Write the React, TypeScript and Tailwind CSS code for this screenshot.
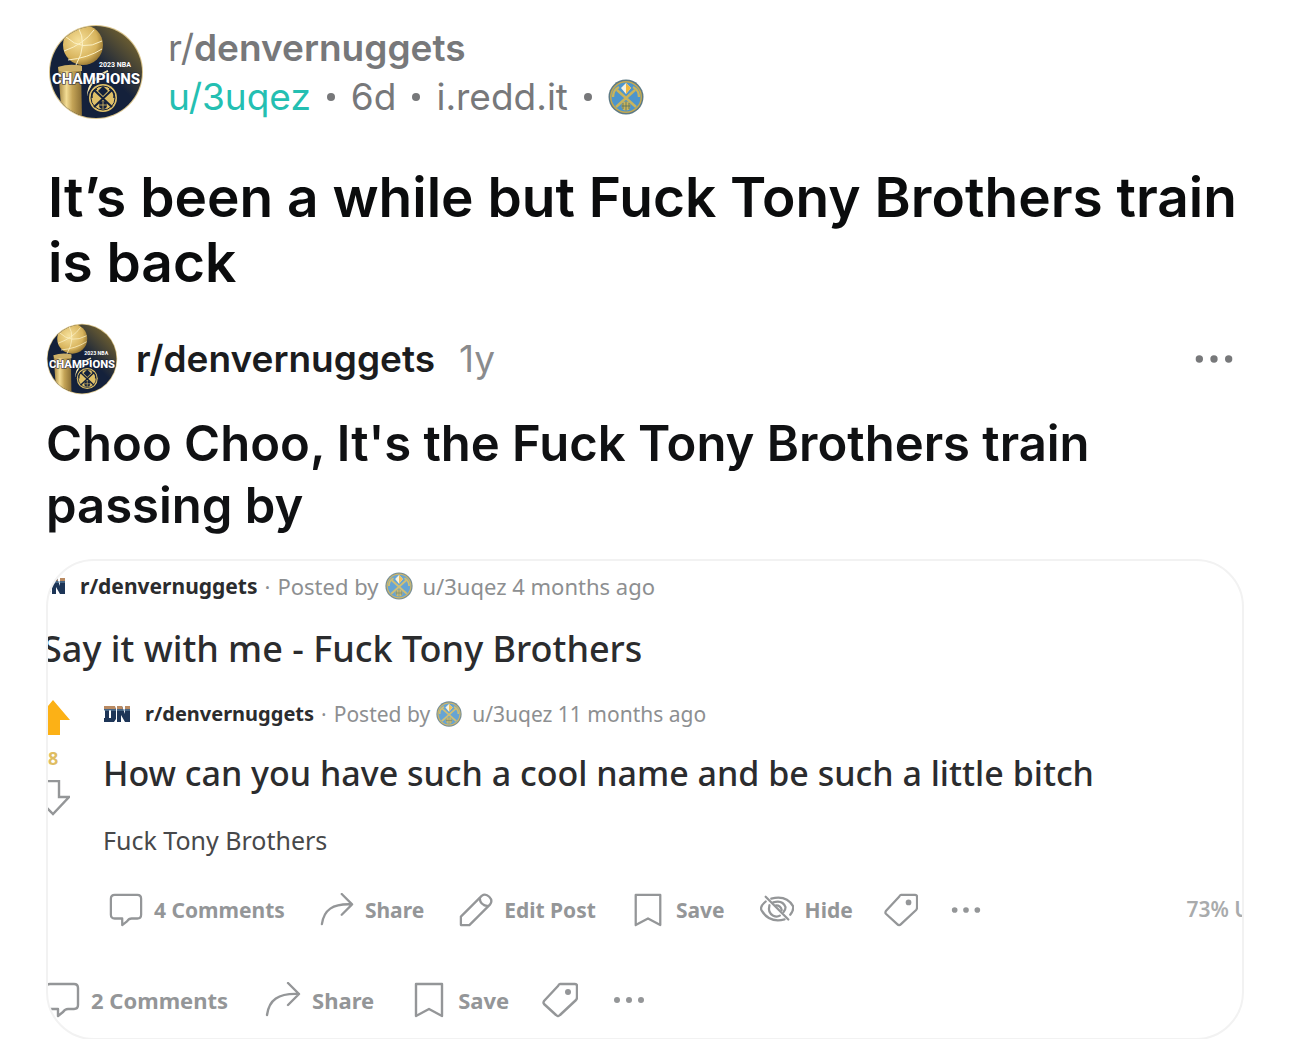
import React from 'react';
import { clsx } from 'clsx';

interface IconProps {
  className?: string;
}

interface Action {
  label: string;
  icon: React.ComponentType<IconProps>;
  iconOnly?: boolean;
}

interface PostMetaProps {
  age: string;
  small?: boolean;
}

function ChampionsLogo({ className }: IconProps) {
  return (
    <svg viewBox="0 0 96 96" className={className} role="img" aria-label="2023 NBA Champions">
      <defs>
        <linearGradient id="navy" x1="0.2" y1="0.8" x2="0.9" y2="0.1">
          <stop offset="0.5" stopColor="#14213b" />
          <stop offset="1" stopColor="#7a672f" />
        </linearGradient>
        <linearGradient id="trophy" x1="0" y1="0" x2="1" y2="0">
          <stop offset="0" stopColor="#9a7c38" />
          <stop offset="0.35" stopColor="#f3dc94" />
          <stop offset="0.6" stopColor="#c4a457" />
          <stop offset="1" stopColor="#8a6e33" />
        </linearGradient>
        <radialGradient id="ball" cx="0.4" cy="0.4" r="0.65">
          <stop offset="0" stopColor="#f6e09a" />
          <stop offset="0.7" stopColor="#d8b45d" />
          <stop offset="1" stopColor="#94742f" />
        </radialGradient>
        <clipPath id="disc">
          <circle cx="48" cy="48" r="46" />
        </clipPath>
      </defs>
      <circle cx="48" cy="48" r="47" fill="#d9c48c" />
      <g clipPath="url(#disc)">
        <rect width="96" height="96" fill="url(#navy)" />
        <path d="M10 43 L33 41 L34 96 L14 96 Z" fill="url(#trophy)" />
        <path d="M10 43 Q22 39 34 42 L34 47 L11 47 Z" fill="#cdb068" />
        <circle cx="35" cy="21" r="20" fill="url(#ball)" />
        <g fill="none" stroke="#fbf0c4" strokeWidth="1">
          <path d="M18 13 Q34 28 54 17" />
          <path d="M16 27 Q36 20 46 6" />
          <path d="M30 3 Q40 20 28 41" />
          <path d="M20 36 Q40 34 54 25" />
        </g>
        <path d="M40 72 Q40 56 60 47" fill="none" stroke="#f7e7ae" strokeWidth="2" />
      </g>
      <text x="51" y="43" fill="#fff" fontSize="7" fontWeight="700" fontFamily="Roboto, sans-serif">
        2023 NBA
      </text>
      <text
        x="48"
        y="60"
        textAnchor="middle"
        fill="#fff"
        stroke="#14213b"
        strokeWidth="1.2"
        paintOrder="stroke"
        fontSize="15"
        fontWeight="800"
        fontFamily="Roboto, sans-serif"
      >
        CHAMPIONS
      </text>
      <circle cx="55" cy="74" r="16" fill="#14213b" />
      <circle cx="55" cy="74" r="14" fill="#dfc068" />
      <circle cx="55" cy="74" r="12" fill="none" stroke="#14213b" strokeWidth="1" />
      <g stroke="#14213b" strokeWidth="2" fill="none">
        <path d="M46 83 L64 66 M64 83 L46 66" />
        <path d="M44 74 Q43 67 49 65 M66 74 Q67 67 61 65" strokeWidth="1.5" />
      </g>
      <path d="M55 62 L60 67 L55 72 L50 67 Z" fill="#14213b" />
      <circle cx="55" cy="81" r="4" fill="#14213b" />
      <path d="M51 81 H59 M55 77 V85" stroke="#dfc068" strokeWidth="0.8" />
    </svg>
  );
}

function NuggetsBadge({ className }: IconProps) {
  return (
    <svg viewBox="0 0 36 36" className={className} role="img" aria-label="Nuggets flair">
      <circle cx="18" cy="18" r="17.5" fill="#5d7a86" />
      <circle cx="18" cy="18" r="16" fill="#c5a94f" />
      <circle cx="18" cy="18" r="14.5" fill="#4d95cc" />
      <path
        d="M8 28 L27 11 M28 28 L9 11 M5 18 Q5 11 11 8 M31 18 Q31 11 25 8"
        fill="none"
        stroke="#c9b45c"
        strokeWidth="2.4"
      />
      <path d="M18 4 L23 9 L18 15 L13 9 Z" fill="#f4f1df" />
      <path d="M18 4 L23 9 L18 15 Z" fill="#efb73c" />
      <circle cx="18" cy="27" r="4.5" fill="#c9b45c" />
      <path d="M13.5 27 H22.5 M18 22.5 V31.5 M15 24 V30 M21 24 V30" stroke="#56705f" strokeWidth="0.8" />
    </svg>
  );
}

function DnLogo({ className }: IconProps) {
  return (
    <svg viewBox="0 0 28 18" className={className} role="img" aria-label="DN">
      <path
        d="M1 1 H11 L13 4 V14 L11 17 H1 V13 H2 V5 H1 Z M6 5 V13 H8 V5 Z M14 1 H19 L22 9 V1 H27 V17 H22 L18 10 V17 H14 Z"
        fill="#1d3557"
        fillRule="evenodd"
      />
      <path d="M1 1 H12 L13 4 H1 Z M14 1 H19 L20 4 H14 Z M22 1 H27 V4 H22 Z" fill="#b98a62" />
      <path d="M1 5 H13 M14 5 H27" stroke="#6f93b0" />
    </svg>
  );
}

function CommentIcon({ className }: IconProps) {
  return (
    <svg viewBox="0 0 36 36" className={className} fill="none" stroke="currentColor" strokeWidth="2.4" strokeLinejoin="round">
      <path d="M6 2 H30 Q34 2 34 6 V23 Q34 27 30 27 H24 Q21 27 19 30 L14 34 V27 H6 Q2 27 2 23 V6 Q2 2 6 2 Z" />
    </svg>
  );
}

function ShareIcon({ className }: IconProps) {
  return (
    <svg viewBox="0 0 36 36" className={className} fill="none" stroke="currentColor" strokeWidth="2.4" strokeLinecap="round" strokeLinejoin="round">
      <path d="M2 33 C4 18 13 11 34 12 M23 1 L34 12 L23 23" />
    </svg>
  );
}

function PencilIcon({ className }: IconProps) {
  return (
    <svg viewBox="0 0 36 36" className={className} fill="none" stroke="currentColor" strokeWidth="2.4" strokeLinejoin="round">
      <path d="M2 34 V25 L24 3 Q28 0 32 4 Q36 8 33 12 L11 34 Z" />
      <path d="M22 5 Q22 13 31 14" />
    </svg>
  );
}

function BookmarkIcon({ className }: IconProps) {
  return (
    <svg viewBox="0 0 36 36" className={className} fill="none" stroke="currentColor" strokeWidth="2.4" strokeLinejoin="round">
      <path d="M5 2 H31 V34 L18 27 L5 34 Z" />
    </svg>
  );
}

function HideIcon({ className }: IconProps) {
  return (
    <svg viewBox="0 0 36 36" className={className} fill="none" stroke="currentColor" strokeWidth="2.4" strokeLinecap="round">
      <path d="M12 6 Q28 2 35 14 Q36 18 32 23" />
      <path d="M6 9 Q-1 15 2 19 Q10 32 26 28" />
      <path d="M14 10 Q24 7 27 15 Q27 18 25 20" />
      <path d="M10 13 Q8 21 14 24 Q18 26 21 24" />
      <path d="M17 13 Q22 13 23 18" />
      <path d="M6 4 L30 28" />
    </svg>
  );
}

function TagIcon({ className }: IconProps) {
  return (
    <svg viewBox="0 0 36 36" className={className} fill="none" stroke="currentColor" strokeWidth="2.4" strokeLinejoin="round">
      <path d="M18 2 H33 Q35 2 35 4 V15 Q35 17 34 18 L18 33 Q16 35 14 33 L2 22 Q1 21 2 19 L16 4 Q17 2 18 2 Z" />
      <circle cx="26" cy="10" r="3" fill="currentColor" stroke="none" />
    </svg>
  );
}

function DotsIcon({ className }: IconProps) {
  return (
    <svg viewBox="0 0 36 36" className={className} fill="currentColor">
      <circle cx="6" cy="18" r="3" />
      <circle cx="18" cy="18" r="3" />
      <circle cx="30" cy="18" r="3" />
    </svg>
  );
}

const innerActions: Action[] = [
  { label: '4 Comments', icon: CommentIcon },
  { label: 'Share', icon: ShareIcon },
  { label: 'Edit Post', icon: PencilIcon },
  { label: 'Save', icon: BookmarkIcon },
  { label: 'Hide', icon: HideIcon },
  { label: 'Tag', icon: TagIcon, iconOnly: true },
  { label: 'More', icon: DotsIcon, iconOnly: true },
];

const outerActions: Action[] = [
  { label: '2 Comments', icon: CommentIcon },
  { label: 'Share', icon: ShareIcon },
  { label: 'Save', icon: BookmarkIcon },
  { label: 'Tag', icon: TagIcon, iconOnly: true },
  { label: 'More', icon: DotsIcon, iconOnly: true },
];

function ActionBar({ actions, small }: { actions: Action[]; small?: boolean }) {
  return (
    <div
      className={clsx(
        "flex items-center font-['Noto_Sans',sans-serif] leading-9 font-bold text-[#949698]",
        small ? 'gap-[35px] text-[21px]' : 'gap-[37px] text-[22px]'
      )}
    >
      {actions.map(({ label, icon: Icon, iconOnly }) => (
        <button
          key={label}
          type="button"
          aria-label={label}
          className={clsx('flex shrink-0 items-center gap-[11px]', iconOnly && '-ml-1')}
        >
          <Icon className={small ? 'size-[34px]' : 'size-9'} />
          {!iconOnly && <span>{label}</span>}
        </button>
      ))}
    </div>
  );
}

function PostMeta({ age, small }: PostMetaProps) {
  return (
    <div
      className={clsx(
        "flex items-center font-['Noto_Sans',sans-serif] leading-9 whitespace-nowrap text-[#8d8f91]",
        small ? 'text-[21px]' : 'text-[22px]'
      )}
    >
      <DnLogo className="mr-[14px] h-[18px] w-7" />
      <a href="#" className={clsx('font-bold text-[#2b2c2e]', small ? 'text-[20px]' : 'text-[21px]')}>
        r/denvernuggets
      </a>
      <span className="mx-[7px]">·</span>
      <span>Posted by</span>
      <NuggetsBadge className={clsx('mx-[6px] opacity-85', small ? 'size-[26px]' : 'size-7')} />
      <span className="ml-1">{age}</span>
    </div>
  );
}

function Dot() {
  return <span className="size-2 rounded-full bg-[#77787a]" />;
}

export default function App() {
  return (
    <main className="min-h-screen overflow-hidden bg-white font-['Inter',sans-serif] text-[#0b0c0d]">
      {/* Post header */}
      <header className="flex items-center gap-6 px-12 pt-[23px]">
        <ChampionsLogo className="size-24" />
        <div className="text-[37px] leading-[49px] text-[#77787a]">
          <div>
            r/<span className="font-semibold">denvernuggets</span>
          </div>
          <div className="flex items-center gap-4">
            <a href="#" className="text-[#24bfb2]">
              u/3uqez
            </a>
            <Dot />
            <span>6d</span>
            <Dot />
            <span>i.redd.it</span>
            <Dot />
            <NuggetsBadge className="size-9" />
          </div>
        </div>
      </header>
      <h1 className="mt-11 pr-10 pl-12 text-[55px] leading-[65px] font-semibold">
        It’s been a while but Fuck Tony Brothers train is back
      </h1>

      {/* Crossposted screenshot */}
      <article className="mt-7 px-[46px]">
        <div className="flex items-center">
          <ChampionsLogo className="size-[72px]" />
          <span className="ml-[18px] text-[37px] leading-[48px] font-semibold text-[#1b1c1e]">
            r/denvernuggets
          </span>
          <span className="ml-6 text-[37px] leading-[48px] text-[#8a8b8d]">1y</span>
          <button type="button" aria-label="More options" className="mr-2 ml-auto text-[#77787a]">
            <DotsIcon className="size-11" />
          </button>
        </div>
        <h2 className="mt-[18px] text-[49px] leading-[62px] font-semibold text-[#101113]">
          Choo Choo, It's the Fuck Tony Brothers train passing by
        </h2>

        <section className="mt-[22px] overflow-hidden rounded-[48px] border-2 border-[#f2f2f2] pb-5">
          <div className="-ml-[10px] pt-[7px]">
            <PostMeta age="u/3uqez 4 months ago" />
            <h3 className="mt-5 pl-1 font-['Noto_Sans',sans-serif] text-[36px] leading-[50px] font-medium text-[#2b2c2e]">
              Say it with me - Fuck Tony Brothers
            </h3>
          </div>

          <div className="mt-[22px] flex">
            <div className="-ml-4 flex w-[71px] shrink-0 flex-col items-start pt-1">
              <button type="button" aria-label="Upvote" className="text-[#fcb116]">
                <svg viewBox="0 0 38 36" className="h-9 w-[38px]" fill="currentColor">
                  <path d="M21 0 L38 20 H28 V35 H13 V20 H4 Z" />
                </svg>
              </button>
              <span className="ml-4 font-['Noto_Sans',sans-serif] text-[18px] leading-[44px] font-bold text-[#dfbd62]">
                8
              </span>
              <button type="button" aria-label="Downvote" className="text-[#949698]">
                <svg viewBox="0 0 38 36" className="h-9 w-[38px]" fill="none" stroke="currentColor" strokeWidth="2.4">
                  <path d="M13 1 H27 V17 H37 L21 34 L4 17 H13 Z" />
                </svg>
              </button>
            </div>

            <div className="min-w-0 flex-1">
              <PostMeta age="u/3uqez 11 months ago" small />
              <h3 className="mt-4 font-['Noto_Sans',sans-serif] text-[34px] leading-[50px] font-medium text-[#2b2c2e]">
                How can you have such a cool name and be such a little bitch
              </h3>
              <p className="mt-[22px] font-['Noto_Sans',sans-serif] text-[25px] leading-10 text-[#47484a]">
                Fuck Tony Brothers
              </p>
              <div className="mt-8 flex items-center justify-between pl-[6px]">
                <ActionBar actions={innerActions} small />
                <span className="-mr-2 font-['Noto_Sans',sans-serif] text-[21px] font-semibold whitespace-nowrap text-[#a9abac]">
                  73% U
                </span>
              </div>
            </div>
          </div>

          <div className="mt-[54px] -ml-1">
            <ActionBar actions={outerActions} />
          </div>
        </section>
      </article>
    </main>
  );
}
